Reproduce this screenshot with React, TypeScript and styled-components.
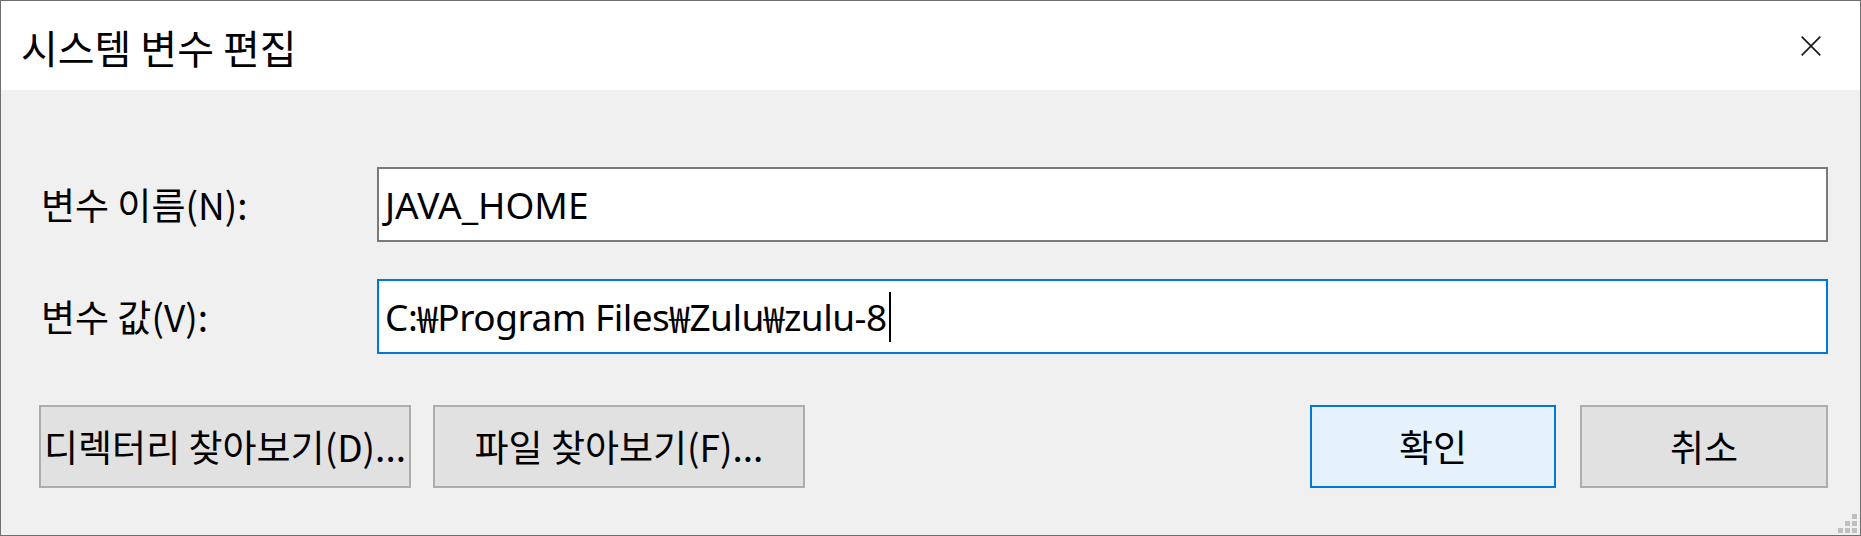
import React from "react";
import styled, { createGlobalStyle } from "styled-components";

const Global = createGlobalStyle`
  html, body { margin: 0; padding: 0; background: #f0f0f0; }
  #root { width: 1861px; height: 536px; }
`;

const FONT = `"Noto Sans CJK KR", "Noto Sans", sans-serif`;
const LATIN = `"Noto Sans", "Noto Sans CJK KR", sans-serif`;

const Window = styled.div`
  position: relative;
  box-sizing: border-box;
  width: 1861px;
  height: 536px;
  border: 1px solid #6f6f6f;
  background: #f0f0f0;
  display: flex;
  flex-direction: column;
  font-family: ${FONT};
  color: #000;
  overflow: hidden;
`;

const TitleBar = styled.div`
  height: 89px;
  flex: none;
  background: #ffffff;
  display: flex;
  align-items: center;
  justify-content: space-between;
  padding: 2px 39px 0 20px;
  box-sizing: border-box;
`;

const Title = styled.div`
  font-size: 40px;
  line-height: 1;
`;

const CloseIcon = styled.svg`
  width: 20px;
  height: 20px;
  display: block;
  margin-top: -2px;
`;

const Body = styled.div`
  flex: 1;
  display: flex;
  flex-direction: column;
  padding: 77px 32px 0 38px;
`;

const Form = styled.div`
  display: grid;
  grid-template-columns: 338px 1fr;
  row-gap: 37px;
  align-items: center;
`;

const Label = styled.div`
  font-size: 37px;
  line-height: 1;
  padding-left: 2px;
  white-space: nowrap;
`;

const Field = styled.div<{ $focused?: boolean; $tight?: boolean }>`
  box-sizing: border-box;
  height: 75px;
  background: #ffffff;
  border: 2px solid ${(p) => (p.$focused ? "#0078d7" : "#7a7a7a")};
  display: flex;
  align-items: center;
  padding-left: 6px;
  font-family: ${LATIN};
  font-size: 37px;
  letter-spacing: ${(p) => (p.$tight ? "-0.5px" : "0")};
  white-space: pre;
`;

const Won = styled.span`
  font-family: ${FONT};
`;

const Caret = styled.span`
  display: inline-block;
  width: 2px;
  height: 50px;
  background: #000;
  margin-left: 2px;
`;

const ButtonRow = styled.div`
  margin-top: 51px;
  display: flex;
  justify-content: space-between;
`;

const ButtonGroup = styled.div<{ $gap: number }>`
  display: flex;
  gap: ${(p) => p.$gap}px;
`;

const Button = styled.div<{ $w: number; $primary?: boolean }>`
  box-sizing: border-box;
  width: ${(p) => p.$w}px;
  height: 83px;
  border: 2px solid ${(p) => (p.$primary ? "#0078d7" : "#adadad")};
  background: ${(p) => (p.$primary ? "#e5f1fb" : "#e1e1e1")};
  display: flex;
  align-items: center;
  justify-content: center;
  font-size: 37px;
  line-height: 1;
  white-space: nowrap;
  overflow: hidden;
`;

const Grip = styled.svg`
  position: absolute;
  right: 3px;
  bottom: 2px;
  width: 19px;
  height: 19px;
`;

const path = ["C:", "₩", "Program Files", "₩", "Zulu", "₩", "zulu-8"];

export default function App() {
  return (
    <>
      <Global />
      <Window>
        <TitleBar>
          <Title>시스템 변수 편집</Title>
          <CloseIcon viewBox="0 0 20 20">
            <path d="M0.7 0.7 L19.3 19.3 M19.3 0.7 L0.7 19.3" stroke="#1b1b1b" strokeWidth="1.7" />
          </CloseIcon>
        </TitleBar>
        <Body>
          <Form>
            <Label>변수 이름(N):</Label>
            <Field>JAVA_HOME</Field>
            <Label>변수 값(V):</Label>
            <Field $focused $tight>
              {path.map((s, i) => (s === "₩" ? <Won key={i}>₩</Won> : <span key={i}>{s}</span>))}
              <Caret />
            </Field>
          </Form>
          <ButtonRow>
            <ButtonGroup $gap={22}>
              <Button $w={372}>디렉터리 찾아보기(D)...</Button>
              <Button $w={372}>파일 찾아보기(F)...</Button>
            </ButtonGroup>
            <ButtonGroup $gap={24}>
              <Button $w={246} $primary>확인</Button>
              <Button $w={248}>취소</Button>
            </ButtonGroup>
          </ButtonRow>
        </Body>
        <Grip viewBox="0 0 19 19">
          {[
            [14, 0],
            [7, 7],
            [14, 7],
            [0, 14],
            [7, 14],
            [14, 14],
          ].map(([x, y], i) => (
            <rect key={i} x={x} y={y} width="5" height="5" fill="#bfbfbf" />
          ))}
        </Grip>
      </Window>
    </>
  );
}
